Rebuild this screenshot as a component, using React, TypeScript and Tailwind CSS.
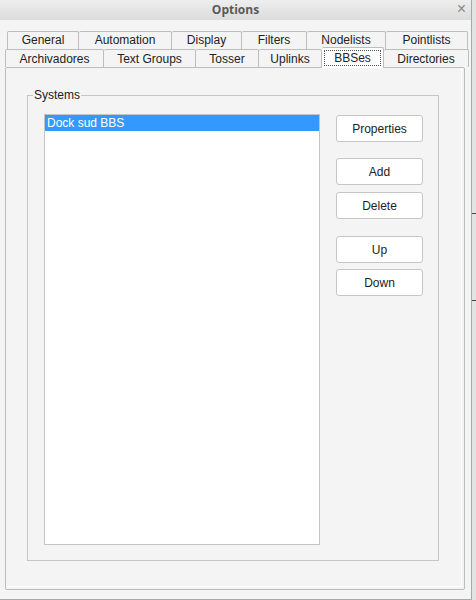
import React from "react";

const row1 = [
  { t: "General", w: 72 },
  { t: "Automation", w: 93 },
  { t: "Display", w: 70 },
  { t: "Filters", w: 65 },
  { t: "Nodelists", w: 79 },
  { t: "Pointlists", w: 82 },
];

const row2 = [
  { t: "Archivadores", w: 99 },
  { t: "Text Groups", w: 92 },
  { t: "Tosser", w: 63 },
  { t: "Uplinks", w: 63 },
  { t: "BBSes", w: 62, sel: true },
  { t: "Directories", w: 85 },
];

function Btn({ label, className = "" }: { label: string; className?: string }) {
  return (
    <div
      className={`w-[87px] h-[27px] rounded-[3px] border border-[#c6c6c6] bg-white flex items-center justify-center text-[12px] text-[#222] ${className}`}
    >
      {label}
    </div>
  );
}

export default function App() {
  return (
    <div
      className="w-[476px] h-[600px] flex bg-[#e4e6e6] overflow-hidden"
      style={{ fontFamily: '"Liberation Sans", Arial, sans-serif' }}
    >
      <div className="w-[472px] h-[600px] shrink-0 bg-[#f4f4f4] border-r border-b border-[#a8a8a8] flex flex-col">
        {/* title bar */}
        <div className="h-[20px] relative flex items-center justify-center bg-gradient-to-b from-[#eeeeee] to-[#dcdcdc]">
          <span
            className="text-[12px] font-bold text-[#5a5a5a]"
            style={{ fontFamily: '"Open Sans", "Liberation Sans", sans-serif' }}
          >
            Options
          </span>
          <span className="absolute right-[5px] top-[1px] text-[16px] leading-[16px] text-[#8a8a8a]">×</span>
        </div>

        {/* tabs */}
        <div className="mt-[11px] h-[36px] relative">
          <div className="flex ml-[7px] h-[18px]">
            {row1.map((tab, i) => (
              <div
                key={tab.t}
                className={`h-[19px] border-t border-r border-[#bdbdbd] ${i === 0 ? "border-l" : ""} rounded-t-[2px] bg-[#f4f4f4] flex items-start justify-center text-[12px] leading-[17px] text-[#222]`}
                style={{ width: tab.w }}
              >
                {tab.t}
              </div>
            ))}
          </div>
          <div className="flex ml-[5px] h-[18px] items-end relative">
            {row2.map((tab, i) =>
              tab.sel ? (
                <div
                  key={tab.t}
                  className="h-[21px] -mb-[1px] border-t border-r border-[#bdbdbd] rounded-t-[2px] bg-white flex items-center justify-center p-[2px] z-10 relative"
                  style={{ width: tab.w }}
                >
                  <div className="w-full h-full border border-dotted border-[#555] flex items-center justify-center text-[12px] text-[#222]">
                    {tab.t}
                  </div>
                </div>
              ) : (
                <div
                  key={tab.t}
                  className={`h-[18px] border-t border-r border-[#bdbdbd] ${i === 0 ? "border-l" : ""} rounded-t-[2px] bg-[#f4f4f4] flex items-center justify-center text-[12px] text-[#222]`}
                  style={{ width: tab.w }}
                >
                  {tab.t}
                </div>
              )
            )}
          </div>
        </div>

        {/* panel */}
        <div className="ml-[5px] w-[460px] h-[523px] border border-[#bcbcbc] bg-[#f4f4f4] rounded-[2px] shadow-[inset_-2px_-2px_0_#f4f4f4,inset_-3px_-3px_0_#ffffff] pt-[27px] pl-[21px]">
          {/* group box */}
          <div className="relative w-[412px] h-[466px] border border-[#c6c6c6] flex pt-[18px] pl-[16px]">
            <span className="absolute left-[5px] -top-[9px] bg-[#f4f4f4] px-[1px] text-[12px] leading-[16px] text-[#222]">
              Systems
            </span>
            <div className="w-[276px] h-[431px] border border-[#c4c4c4] bg-white">
              <div className="h-[16px] bg-[#3399ff] text-[12px] leading-[16px] text-white pl-[2px]">
                Dock sud BBS
              </div>
            </div>
            <div className="ml-[16px] flex flex-col pt-[1px]">
              <Btn label="Properties" />
              <Btn label="Add" className="mt-[16px]" />
              <Btn label="Delete" className="mt-[7px]" />
              <Btn label="Up" className="mt-[17px]" />
              <Btn label="Down" className="mt-[6px]" />
            </div>
          </div>
        </div>
      </div>
      <div className="flex-1 h-[600px] bg-[#e2e4e4] flex flex-col">
        <div className="h-[213px]" />
        <div className="h-[1px] bg-[#444]" />
        <div className="h-[86px]" />
        <div className="h-[1px] bg-[#444]" />
      </div>
    </div>
  );
}
